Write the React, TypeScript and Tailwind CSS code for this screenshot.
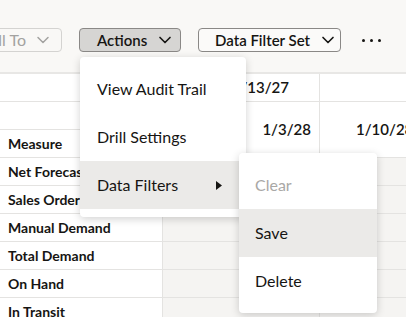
import { ChevronDown } from 'lucide-react';

const rows = ['Net Forecast', 'Sales Order', 'Manual Demand', 'Total Demand', 'On Hand', 'In Transit'];

const Cell = ({ className = '', children }: { className?: string; children?: React.ReactNode }) => (
  <div className={`flex items-center border-b border-r border-[#e4e3e1] ${className}`}>{children}</div>
);

const App = () => {
  return (
    <div className="relative h-[317px] w-[406px] overflow-hidden bg-white font-['Lato',sans-serif] text-[#161513]">
      {/* toolbar */}
      <div className="flex h-[74px] items-start gap-[17px] border-b-2 border-[#e8e7e5] bg-[#f9f8f6] pt-[28px]">
        <button className="-ml-[22px] flex h-[24px] w-[84px] shrink-0 items-center justify-end gap-[7px] whitespace-nowrap rounded-[4px] border border-[#d4d3d1] pr-[8px] text-[16px] text-[#a3a2a0]">
          Roll To
          <ChevronDown size={20} strokeWidth={1.8} />
        </button>
        <button className="flex h-[24px] w-[102px] shrink-0 items-center gap-[8px] whitespace-nowrap rounded-[4px] border border-[#8a8886] bg-[#d6d5d3] pl-[17px] text-[15px] font-semibold">
          Actions
          <ChevronDown size={20} strokeWidth={2} />
        </button>
        <button className="flex h-[24px] w-[143px] shrink-0 items-center gap-[8px] whitespace-nowrap rounded-[4px] border border-[#8a8886] bg-[#fbfaf9] pl-[16px] text-[15px] font-semibold">
          Data Filter Set
          <ChevronDown size={20} strokeWidth={2} />
        </button>
        <div className="ml-[4px] flex h-[24px] items-center gap-[5px]">
          <span className="h-[3px] w-[3px] rounded-full bg-[#161513]" />
          <span className="h-[3px] w-[3px] rounded-full bg-[#161513]" />
          <span className="h-[3px] w-[3px] rounded-full bg-[#161513]" />
        </div>
      </div>

      {/* grid */}
      <div className="grid grid-cols-[163px_157px_120px] auto-rows-[28px]">
        <Cell />
        <Cell className="justify-end pr-[30px] text-[15px] font-semibold">12/13/27</Cell>
        <Cell />
        <Cell />
        <Cell className="row-span-2 justify-end pr-[8px] text-[15px] font-semibold">1/3/28</Cell>
        <Cell className="row-span-2 justify-start whitespace-nowrap pl-[36px] text-[15px] font-semibold">1/10/28</Cell>
        <Cell className="pl-[8px] text-[14px] font-bold">Measure</Cell>
        {rows.map((r) => (
          <div key={r} className="contents">
            <Cell className="whitespace-nowrap pl-[8px] text-[14px] font-bold">{r}</Cell>
            <Cell className="bg-[#f5f4f2]" />
            <Cell className="bg-[#f5f4f2]" />
          </div>
        ))}
      </div>

      {/* actions menu */}
      <div className="absolute left-[80px] top-[57px] w-[166px] rounded-[4px] bg-white py-[8px] text-[16px] shadow-[0_2px_8px_rgba(0,0,0,0.18)]">
        <div className="flex h-[48px] items-center pl-[17px]">View Audit Trail</div>
        <div className="flex h-[48px] items-center pl-[17px]">Drill Settings</div>
        <div className="flex h-[48px] items-center justify-between bg-[#ebeae8] pl-[17px] pr-[24px]">
          Data Filters
          <svg width="6" height="9" viewBox="0 0 6 9">
            <path d="M0 0 L6 4.5 L0 9 Z" fill="#161513" />
          </svg>
        </div>
      </div>

      {/* submenu */}
      <div className="absolute left-[239px] top-[153px] w-[138px] rounded-[4px] bg-white py-[8px] text-[16px] shadow-[0_2px_8px_rgba(0,0,0,0.18)]">
        <div className="flex h-[48px] items-center pl-[16px] text-[#a9a8a6]">Clear</div>
        <div className="flex h-[48px] items-center bg-[#ebeae8] pl-[16px]">Save</div>
        <div className="flex h-[48px] items-center pl-[16px]">Delete</div>
      </div>
    </div>
  );
};

export default App;
